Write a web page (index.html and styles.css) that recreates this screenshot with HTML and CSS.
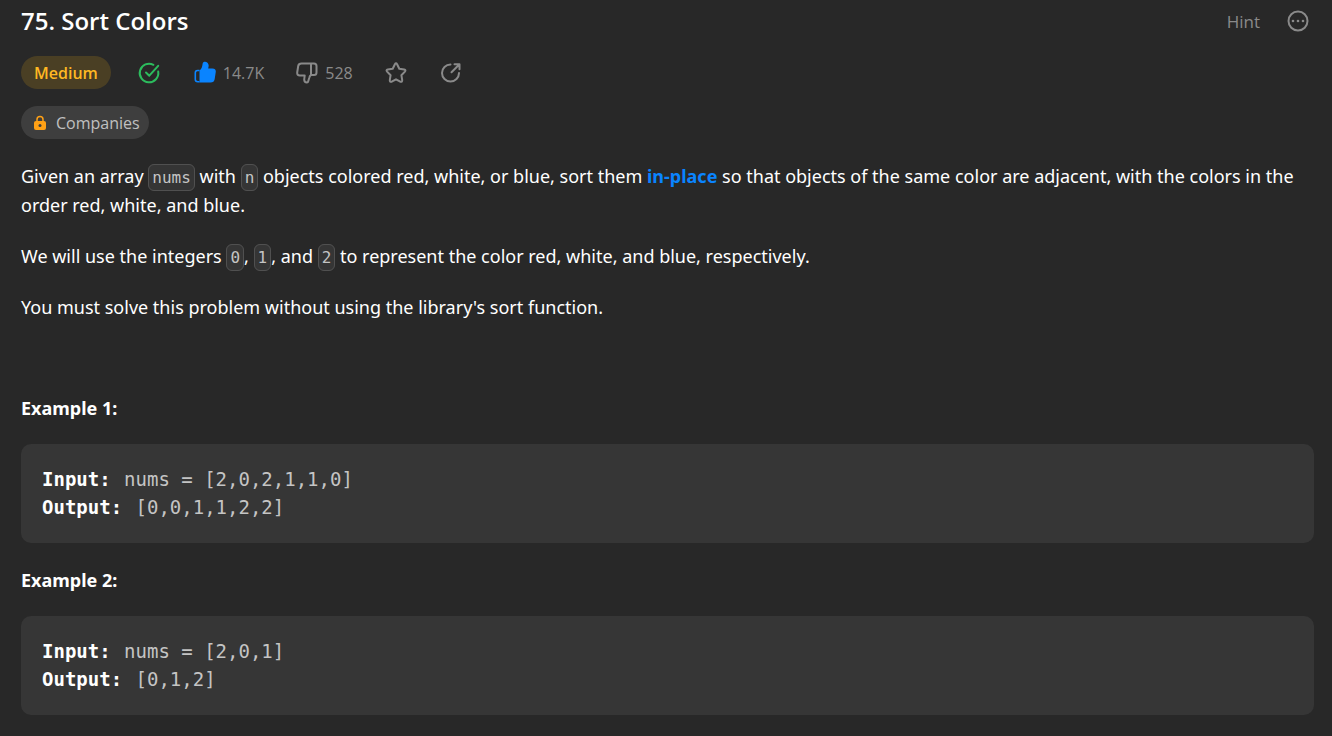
FILE: index.html
```html
<!DOCTYPE html>
<html lang="en">
<head>
<meta charset="utf-8">
<title>75. Sort Colors</title>
<link rel="stylesheet" href="styles.css">
</head>
<body>
<main class="problem">
  <header class="top">
    <h1 class="title">75. Sort Colors</h1>
    <div class="tools">
      <button class="hint" type="button">Hint</button>
      <button class="icon-btn" type="button" aria-label="More">
        <svg width="24" height="24" viewBox="0 0 24 24" fill="none" stroke="currentColor" stroke-width="2"><circle cx="12" cy="12" r="9.5"/><g fill="currentColor" stroke="none"><circle cx="7" cy="12" r="1.300"/><circle cx="12" cy="12" r="1.300"/><circle cx="17" cy="12" r="1.300"/></g></svg>
      </button>
    </div>
  </header>
  <div class="meta">
    <span class="difficulty">Medium</span>
    <svg class="solved" width="24" height="24" viewBox="0 0 24 24" fill="none" stroke="currentColor" stroke-width="2" stroke-linecap="round" stroke-linejoin="round"><path d="M21.200 10.500A9.300 9.300 0 1 1 16.400 3.800"/><path d="M9 11.500l3.300 3.200L21.200 4.800"/></svg>
    <button class="vote liked" type="button"><svg width="24" height="24" viewBox="0 0 24 24"><path d="M6.500 9.500H4.500Q2.300 9.500 2.300 11.800V18.500Q2.300 20.700 4.800 20.700H6.500" fill="none" stroke="currentColor" stroke-width="1.600"/><path fill="currentColor" d="M6.500 9.500C9.300 7.500 9.200 4.500 9.800 2C10.800 -.300 15.600 .300 15.700 4.800L15.200 7.500H19.500Q23 7.500 22.800 10.800L21.700 18Q21.200 21.500 17.500 21.500H6.500Z"/></svg><span>14.7K</span></button>
    <button class="vote" type="button"><svg width="24" height="24" viewBox="0 0 24 24" fill="none" stroke="currentColor" stroke-width="2" stroke-linejoin="round"><path d="M16 2.500H6.500Q3.700 2.500 3.200 5L2.200 11.500Q2 14.500 4.800 14.500H9.700L9.200 18.500Q9.200 21.500 12 21.500Q13 21.500 13.300 20L14.200 17Q14.800 14.500 16 14Z M16 2.500H19Q21.500 2.500 21.500 5V11.500Q21.500 14 19 14H16"/></svg><span>528</span></button>
    <button class="icon-btn" type="button" aria-label="Favorite"><svg width="24" height="24" viewBox="0 0 24 24" fill="none" stroke="currentColor" stroke-width="2" stroke-linejoin="round"><path d="M10.900 3.200Q12 1.300 13.100 3.200L15.300 7.800L20.200 8.500Q22.300 9 20.900 10.600L17.400 14.200L18.200 19.200Q18.200 21.400 16.300 20.700L12 18.300L7.700 20.700Q5.800 21.400 5.800 19.200L6.600 14.200L3.100 10.600Q1.700 9 3.800 8.500L8.700 7.800Z"/></svg></button>
    <button class="icon-btn" type="button" aria-label="Share"><svg width="24" height="24" viewBox="0 0 24 24" fill="none" stroke="currentColor" stroke-width="2" stroke-linecap="round" stroke-linejoin="round"><path d="M11.500 3.500A8.500 8.500 0 1 0 20 12M15.500 3.300H20.500V8.300M20 3.800L12.500 11.300"/></svg></button>
  </div>
  <button class="companies" type="button"><svg width="18" height="18" viewBox="0 0 18 18"><path d="M6 7.500V5.500a3 3 0 0 1 6 0V7.500" fill="none" stroke="currentColor" stroke-width="1.500"/><rect x="3" y="7" width="12" height="9" rx="2" fill="currentColor"/><circle cx="9" cy="11.500" r="1.500" fill="#3e3e3e"/></svg><span>Companies</span></button>
  <section class="content">
    <p>Given an array <code>nums</code> with <code>n</code> objects colored red, white, or blue, sort them <a href="#in-place">in-place</a> so that objects of the same color are adjacent, with the colors in the order red, white, and blue.</p>
    <p>We will use the integers <code>0</code>, <code>1</code>, and <code>2</code> to represent the color red, white, and blue, respectively.</p>
    <p>You must solve this problem without using the library's sort function.</p>
    <h2 class="first">Example 1:</h2>
    <pre><strong>Input:</strong> nums = [2,0,2,1,1,0]
<strong>Output:</strong> [0,0,1,1,2,2]</pre>
    <h2>Example 2:</h2>
    <pre><strong>Input:</strong> nums = [2,0,1]
<strong>Output:</strong> [0,1,2]</pre>
  </section>
</main>
</body>
</html>
```
FILE: styles.css
```css
* { box-sizing: border-box; }
body { margin: 0; background: #282828; color: #fff; font-family: "Open Sans", "Noto Sans", sans-serif; }
.problem { padding: 5px 18px 21px 21px; }
button { border: 0; padding: 0; background: none; color: #8a8a8a; font: inherit; cursor: pointer; }
svg { display: block; flex: none; }
.top { display: flex; justify-content: space-between; align-items: center; height: 32px; }
.title { margin: 0; font-size: 24px; line-height: 32px; font-weight: 600; }
.tools { display: flex; align-items: center; gap: 26px; padding-right: 4px; }
.hint { font-size: 17px; }
.meta { display: flex; align-items: center; height: 33px; margin-top: 19px; color: #8a8a8a; }
.difficulty { padding: 1px 13px 0; border-radius: 17px; background: #4a3f24; color: #ffb822; font-size: 16px; font-weight: 600; line-height: 32px; }
.solved { margin: 0 32px 0 26px; color: #2cbb5d; }
.vote { display: flex; align-items: center; gap: 6px; margin-right: 31px; font-size: 16px; }
.icon-btn + .icon-btn { margin-left: 31px; }
.liked svg { color: #0a84ff; }
.companies { display: flex; align-items: center; gap: 7px; height: 33px; margin-top: 17px; padding: 0 9px 0 10px; border-radius: 17px; background: #3e3e3e; color: #ffa116; font-size: 16px; }
.companies span { color: #c0c0c0; }
.content { margin-top: 23px; font-family: "Noto Sans", "Open Sans", sans-serif; font-size: 18px; line-height: 29px; }
p { margin: 0 0 22px; }
a { color: #0a84ff; font-weight: 700; text-decoration: none; }
code { padding: 3px; border: 1px solid #505050; border-radius: 6px; background: #353535; color: #c4c4c4; font: 16px "DejaVu Sans Mono", monospace; }
h2 { margin: 0 0 21px; font-size: 18px; line-height: 29px; font-weight: 700; }
.first { margin-top: 72px; }
pre { margin: 0 0 23px; padding: 21px 21px 22px; border-radius: 10px; background: #363636; color: #c4c4c4; font: 19px/28px "DejaVu Sans Mono", monospace; }
pre strong { margin-right: 2px; color: #fff; }
```
